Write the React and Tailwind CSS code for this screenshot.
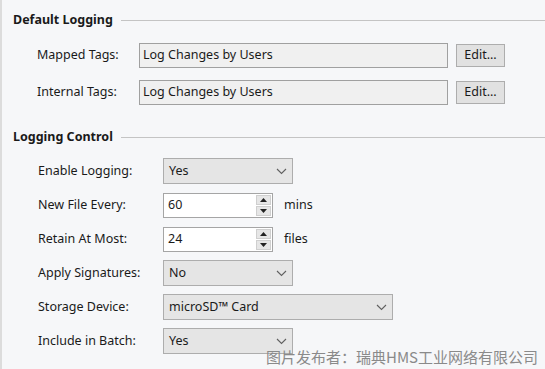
import React from "react";

const Chevron = () => (
  <svg width="11" height="7" viewBox="0 0 11 7" className="shrink-0">
    <path d="M1 1 L5.5 5.5 L10 1" fill="none" stroke="#606060" strokeWidth="1.1" />
  </svg>
);

const Select = ({ value, wide }) => (
  <div
    className={`flex items-center justify-between h-[26px] pl-[5px] pr-[5px] bg-[#e5e5e5] border border-[#adadad] ${
      wide ? "w-[230px]" : "w-[130px]"
    }`}
  >
    <span>{value}</span>
    <Chevron />
  </div>
);

const Spinner = ({ value }) => (
  <div className="flex items-stretch w-[110px] h-[25px] bg-white border border-[#a5a5a5]">
    <div className="flex-1 flex items-center pl-[4px]">{value}</div>
    <div className="flex flex-col w-[16px] gap-px py-px pr-px">
      <div className="flex-1 flex items-center justify-center bg-[#e6e6e6] border border-[#cfcfcf]">
        <svg width="7" height="4" viewBox="0 0 7 4">
          <path d="M0 4 L3.5 0 L7 4 Z" fill="#222" />
        </svg>
      </div>
      <div className="flex-1 flex items-center justify-center bg-[#e6e6e6] border border-[#cfcfcf]">
        <svg width="7" height="4" viewBox="0 0 7 4">
          <path d="M0 0 L3.5 4 L7 0 Z" fill="#222" />
        </svg>
      </div>
    </div>
  </div>
);

const Header = ({ children, className }) => (
  <div className={`flex items-center h-[18px] pl-[11px] ${className}`}>
    <span className="font-bold pr-[8px]">{children}</span>
    <div className="flex-1 h-px bg-[#c4c4c4]" />
  </div>
);

const Row = ({ label, children }) => (
  <div className="flex items-center h-[34px] pl-[36px]">
    <div className="w-[125px] shrink-0">{label}</div>
    {children}
  </div>
);

export default function App() {
  return (
    <div
      className="relative w-[545px] h-[369px] overflow-hidden bg-[#f6f7f9] border-l-2 border-[#dcdcdc] text-[12.5px] text-[#1a1a1a]"
      style={{ fontFamily: '"Noto Sans", "Open Sans", sans-serif' }}
    >
      <Header className="mt-[11px]">Default Logging</Header>

      <div className="mt-[8px]">
        {["Mapped Tags:", "Internal Tags:"].map((label) => (
          <div key={label} className="flex items-center h-[37px] pl-[35px]">
            <div className="w-[102px] shrink-0">{label}</div>
            <div className="flex items-center w-[309px] h-[25px] pl-[3px] bg-[#f0f0f0] border border-[#a0a0a0]">
              Log Changes by Users
            </div>
            <button className="ml-[8px] w-[49px] h-[23px] bg-[#e1e1e1] border border-[#adadad] text-[12.5px]">
              Edit...
            </button>
          </div>
        ))}
      </div>

      <Header className="mt-[17px]">Logging Control</Header>

      <div className="mt-[8px]">
        <Row label="Enable Logging:">
          <Select value="Yes" />
        </Row>
        <Row label="New File Every:">
          <Spinner value="60" />
          <span className="ml-[11px]">mins</span>
        </Row>
        <Row label="Retain At Most:">
          <Spinner value="24" />
          <span className="ml-[11px]">files</span>
        </Row>
        <Row label="Apply Signatures:">
          <Select value="No" />
        </Row>
        <Row label="Storage Device:">
          <Select value="microSD™ Card" wide />
        </Row>
        <Row label="Include in Batch:">
          <Select value="Yes" />
        </Row>
      </div>

      <div
        className="absolute left-[264px] top-[346px] text-[15px] leading-[22px] text-[#8a8a8a] whitespace-nowrap"
        style={{ fontFamily: '"Noto Sans CJK SC", "Noto Sans", sans-serif' }}
      >
        图片发布者：瑞典HMS工业网络有限公司
      </div>
    </div>
  );
}
